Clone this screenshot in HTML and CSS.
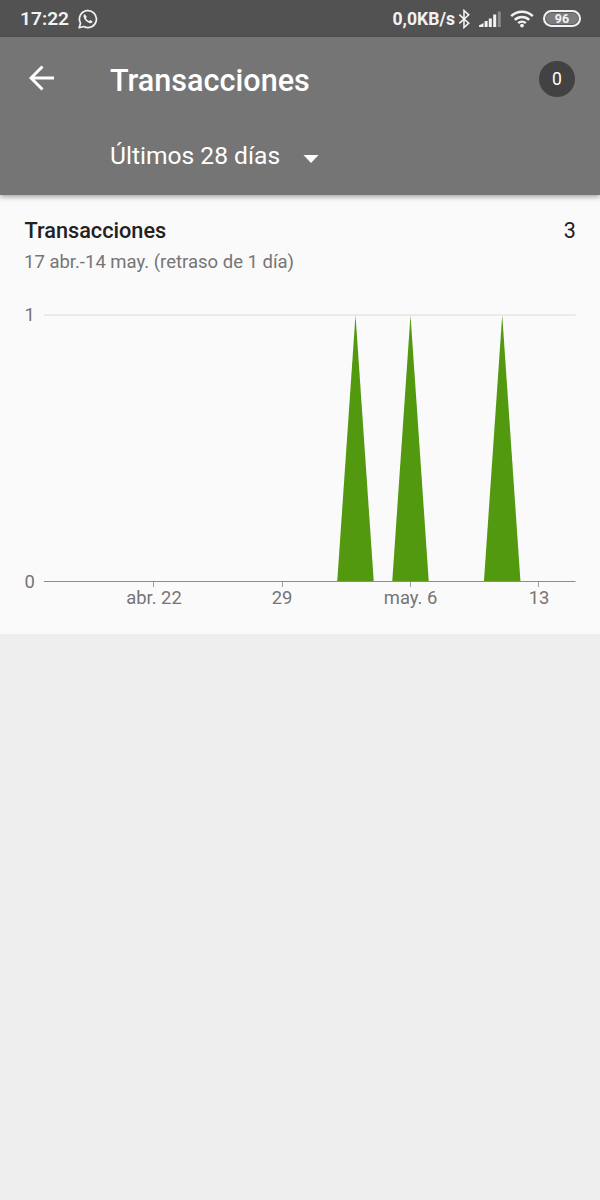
FILE: index.html
```html
<!DOCTYPE html>
<html lang="es">
<head>
    <meta charset="UTF-8">
    <meta name="viewport" content="width=device-width, initial-scale=1.0">
    <title>Transacciones</title>
    <link rel="stylesheet" href="styles.css">
</head>
<body>
    <div class="status-bar">
        <span class="clock">17:22</span>
        <svg class="whatsapp" width="20" height="20" viewBox="0 0 20 20">
            <path d="M1.200 18.800l1.300-4.600A8.500 8.500 0 1 1 5.800 17.500z" fill="none" stroke="#f2f2f2" stroke-width="1.700" stroke-linejoin="round"/>
            <path d="M6.900 5.200c-.9.3-1.600 1.300-1.400 2.400.5 3 3.500 6 6.600 6.600 1.200.2 2.300-.4 2.500-1.700l-2.400-1.500-1.200 1.100c-1.500-.6-2.500-1.600-3.100-3l1-1.200z" fill="#f2f2f2"/>
        </svg>
        <span class="speed">0,0KB/s</span>
        <svg class="bluetooth" width="13" height="20" viewBox="0 0 13 20">
            <path d="M1.300 5.600l9.400 8.600-4.700 4.300V1.500l4.700 4.300-9.400 8.600" fill="none" stroke="#f2f2f2" stroke-width="1.600"/>
        </svg>
        <svg class="signal" width="24" height="18" viewBox="0 0 24 18">
            <g fill="#f2f2f2">
                <path d="M0 17v-1.500L4.500 13V17z"/>
                <rect x="5.600" y="11" width="3" height="6"/>
                <rect x="9.800" y="8.500" width="3" height="8.500"/>
                <rect x="14.200" y="4.500" width="3" height="12.500"/>
            </g>
            <rect x="18.800" y="1.500" width="3" height="15.500" fill="#8a8a8a"/>
        </svg>
        <svg class="wifi" width="24" height="18" viewBox="0 0 24 18">
            <g fill="none" stroke="#f2f2f2" stroke-width="2.500">
                <path d="M1.200 6.200a15.500 15.500 0 0 1 21.600 0"/>
                <path d="M4.800 9.900a10.300 10.300 0 0 1 14.400 0"/>
                <path d="M8.200 13.200a5.500 5.500 0 0 1 7.600 0"/>
            </g>
            <circle cx="12" cy="15.600" r="1.900" fill="#f2f2f2"/>
        </svg>
        <span class="battery">96</span>
    </div>

    <div class="app-bar">
        <div class="title-row">
            <svg class="back" width="26" height="26" viewBox="0 0 26 26">
                <path d="M25 13H2.500M13.500 1.500L2 13l11.500 11.500" fill="none" stroke="#fff" stroke-width="3"/>
            </svg>
            <h1>Transacciones</h1>
            <span class="badge">0</span>
        </div>
        <div class="period">
            <span>Últimos 28 días</span>
            <svg width="16" height="8" viewBox="0 0 16 8">
                <path d="M.5 0h15L8 8z" fill="#fff"/>
            </svg>
        </div>
    </div>

    <div class="card">
        <div class="card-head">
            <h2>Transacciones</h2>
            <span class="total">3</span>
        </div>
        <p class="range">17 abr.-14 may. (retraso de 1 día)</p>
        <svg class="chart" width="600" height="320" viewBox="0 300 600 320">
            <path d="M44 315H575.500" stroke="#e4e4e4" stroke-width="1.500"/>
            <g fill="#53990f">
                <path d="M337.200 582L355.500 315l18.300 267z"/>
                <path d="M392.200 582L410.500 315l18.300 267z"/>
                <path d="M483.900 582L502.200 315l18.300 267z"/>
            </g>
            <path d="M44 581.500H575.500" stroke="#8c8c8c"/>
            <path d="M153.500 582v5M282.500 582v5M410.500 582v5M538.500 582v5" stroke="#9e9e9e"/>
            <g class="y-labels">
                <text x="24.500" y="321">1</text>
                <text x="24.500" y="588">0</text>
            </g>
            <g class="x-labels">
                <text x="154" y="604">abr. 22</text>
                <text x="282" y="604">29</text>
                <text x="410.500" y="604">may. 6</text>
                <text x="539" y="604">13</text>
            </g>
        </svg>
    </div>
</body>
</html>
```
FILE: styles.css
```css
body {
    margin: 0;
    min-height: 1200px;
    background: #eee;
    font-family: Roboto, "Noto Sans", sans-serif;
}
h1, h2, p {
    margin: 0;
    font-weight: 500;
}
svg {
    display: block;
    flex: none;
}
.status-bar {
    display: flex;
    align-items: center;
    box-sizing: border-box;
    height: 37px;
    padding: 0 19px 0 20px;
    background: #525252;
    color: #f2f2f2;
    font-size: 17.6px;
    font-weight: 700;
}
.clock {
    font-size: 19.2px;
    font-weight: 600;
}
.whatsapp {
    margin-left: 9px;
}
.speed {
    margin-left: auto;
}
.bluetooth {
    margin-left: 3px;
}
.signal {
    margin-left: 8px;
}
.wifi {
    margin-left: 7px;
}
.battery {
    box-sizing: border-box;
    width: 38px;
    height: 17px;
    margin-left: 9px;
    border: 2px solid #f2f2f2;
    border-radius: 9px;
    background: #7c7c7c;
    box-shadow: inset 0 0 0 1px #5c5c5c;
    font-size: 12.5px;
    line-height: 14px;
    text-align: center;
}
.app-bar {
    position: relative;
    height: 158px;
    background: #757575;
    color: #fff;
    box-shadow: 0 2px 5px rgba(0,0,0,0.35);
}
.title-row {
    display: flex;
    align-items: center;
    height: 84px;
    padding: 0 25px 0 29px;
}
.back {
    margin-top: -2px;
}
h1 {
    margin-left: 55px;
    padding-top: 2px;
    font-size: 30.6px;
}
.badge {
    width: 36px;
    height: 36px;
    margin-left: auto;
    border-radius: 50%;
    background: #424242;
    font-size: 17.5px;
    line-height: 37px;
    text-align: center;
}
.period {
    display: flex;
    align-items: center;
    height: 68px;
    padding-left: 110px;
    font-size: 24.6px;
}
.period svg {
    margin: 8px 0 0 23px;
}
.card {
    height: 439px;
    background: #fafafa;
}
.card-head {
    display: flex;
    justify-content: space-between;
    padding: 22px 24px 0 24.5px;
    color: #212121;
    font-size: 21.6px;
    line-height: 28px;
}
h2 {
    font-size: 21.7px;
}
.range {
    padding-left: 24px;
    color: #757575;
    font-size: 18.5px;
    font-weight: 400;
    line-height: 34px;
}
.chart {
    margin-top: 21px;
}
.chart text {
    fill: #757575;
    font-size: 18.4px;
}
.x-labels {
    text-anchor: middle;
}
```
